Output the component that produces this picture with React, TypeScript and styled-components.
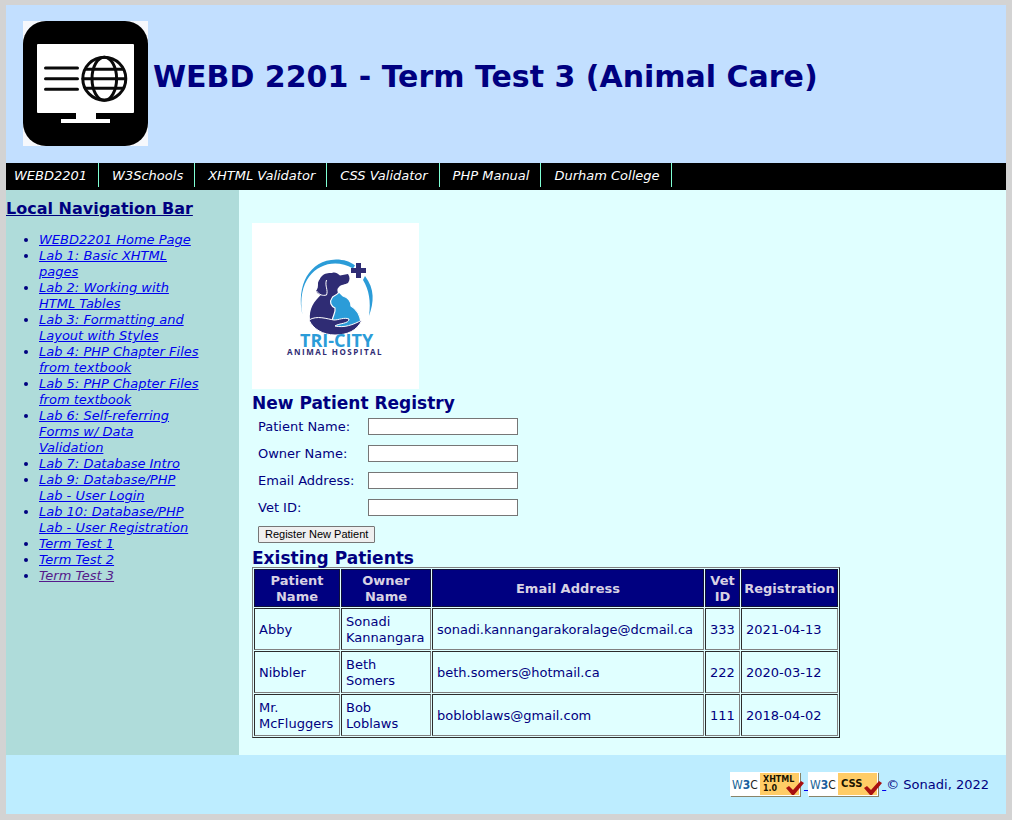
import React from "react";
import styled, { createGlobalStyle } from "styled-components";

const GlobalStyle = createGlobalStyle`
  * { box-sizing: border-box; }
  body {
    margin: 0;
    padding: 5px 6px 6px;
    background: #d3d3d3;
    color: #000080;
    font: 13px/16px Verdana, "DejaVu Sans", sans-serif;
  }
`;

const Header = styled.header`
  display: flex;
  align-items: center;
  gap: 5px;
  padding: 16px 17px 17px;
  background: #c2dfff;
`;

const Title = styled.h1`
  margin: 0;
  padding-bottom: 14px;
  font-size: 30px;
  line-height: 36px;
`;

const TopNav = styled.nav`
  display: flex;
  height: 27px;
  background: #000;
`;

const TopLink = styled.a`
  height: 24px;
  padding: 5px 11px 3px 13px;
  border-right: 1px solid #7fffd4;
  color: #fff;
  font-style: italic;
  text-decoration: none;
  &:first-child { padding-left: 8px; }
`;

const Columns = styled.div`
  display: grid;
  grid-template-columns: 233px 1fr;
`;

const Sidebar = styled.aside`
  padding-top: 10px;
  background: #afdcda;
`;

const Heading = styled.h2`
  margin: 0;
  font-size: 17px;
  line-height: 18px;
`;

const NavHeading = styled(Heading)`
  font-size: 16px;
  text-decoration: underline;
`;

const LinkList = styled.ul`
  margin: 14px 0 0;
  padding: 0 38px 0 33px;
`;

const SideLink = styled.a<{ $visited?: boolean }>`
  color: ${(p) => (p.$visited ? "#551a8b" : "#0000ee")};
  font-style: italic;
`;

const Main = styled.main`
  padding: 33px 13px 17px;
  background: #e0ffff;
`;

const Hospital = styled.svg`
  display: block;
  margin-bottom: 5px;
`;

const Form = styled.form`
  display: grid;
  grid-template-columns: 110px 150px;
  row-gap: 10px;
  padding: 6px;
  align-items: center;
  justify-items: start;
`;

const Field = styled.input`
  width: 100%;
  height: 17px;
  padding: 1px 2px;
  border: 1px solid #767676;
  background: #fff;
`;

const Submit = styled.button`
  grid-column: 1 / -1;
  height: 17px;
  padding: 0 6px;
  border: 1px solid #767676;
  border-radius: 1px;
  background: #efefef;
  color: #000;
  font: 11px/15px "Liberation Sans", Arial, sans-serif;
`;

const Patients = styled.table`
  table-layout: fixed;
  width: 588px;
  border: 1px solid;
  border-color: #808080 #2c2c2c #2c2c2c #808080;
  border-spacing: 1px;
`;

const Th = styled.th<{ $width: number }>`
  width: ${(p) => p.$width}px;
  padding: 3px 2px 1px;
  border: 1px solid #101038;
  background: #000080;
  color: #d8d2e4;
`;

const Td = styled.td`
  padding: 5px 4px 3px;
  border: 1px solid;
  border-color: #2c2c2c #808080 #808080 #2c2c2c;
`;

const Footer = styled.footer`
  display: flex;
  justify-content: flex-end;
  padding: 17px;
  background: #bdedff;
  line-height: 25px;
`;

const BadgeLink = styled.a`
  display: flex;
  color: #0000ee;
  text-decoration: underline;
`;

const BadgeGap = styled.span`
  white-space: pre;
`;

const topLinks = ["WEBD2201", "W3Schools", "XHTML Validator", "CSS Validator", "PHP Manual", "Durham College"];

const sideLinks = [
  "WEBD2201 Home Page",
  "Lab 1: Basic XHTML pages",
  "Lab 2: Working with HTML Tables",
  "Lab 3: Formatting and Layout with Styles",
  "Lab 4: PHP Chapter Files from textbook",
  "Lab 5: PHP Chapter Files from textbook",
  "Lab 6: Self-referring Forms w/ Data Validation",
  "Lab 7: Database Intro",
  "Lab 9: Database/PHP Lab - User Login",
  "Lab 10: Database/PHP Lab - User Registration",
  "Term Test 1",
  "Term Test 2",
  "Term Test 3",
];

const fields = [
  { id: "patient", label: "Patient Name:" },
  { id: "owner", label: "Owner Name:" },
  { id: "email", label: "Email Address:" },
  { id: "vet", label: "Vet ID:" },
];

const columns = [
  { name: "Patient Name", width: 86 },
  { name: "Owner Name", width: 90 },
  { name: "Email Address", width: 272 },
  { name: "Vet ID", width: 35 },
  { name: "Registration", width: 97 },
];

const patients = [
  ["Abby", "Sonadi Kannangara", "sonadi.kannangarakoralage@dcmail.ca", "333", "2021-04-13"],
  ["Nibbler", "Beth Somers", "beth.somers@hotmail.ca", "222", "2020-03-12"],
  ["Mr. McFluggers", "Bob Loblaws", "bobloblaws@gmail.com", "111", "2018-04-02"],
];

const SiteLogo = () => (
  <svg width="125" height="125" viewBox="0 0 125 125" role="img" aria-label="Web page on a monitor">
    <rect width="125" height="125" fill="#f6f8fc" />
    <rect width="125" height="125" rx="23" fill="#000" />
    <rect x="14" y="23" width="97" height="69" rx="1" fill="#fff" />
    <path d="M53 91h20v7h14v4H38v-4h15z" fill="#fff" />
    <g fill="none" stroke="#0a0a0a" strokeWidth="3" strokeLinecap="round">
      <path d="M22.500 47h32M22.500 57.700h32M22.500 68.300h32" />
      <circle cx="81.300" cy="57.700" r="21.500" />
      <ellipse cx="81.300" cy="57.700" rx="12.300" ry="21.500" />
      <path d="M62.500 48.300h37.600M60 57.700h42.500M62.500 67.300h37.600" />
    </g>
  </svg>
);

const HospitalLogo = () => (
  <Hospital width="167" height="166" viewBox="0 0 167 166" role="img" aria-label="Tri-City Animal Hospital">
    <rect width="167" height="166" fill="#fff" />
    <g fill="#2b9cd8">
      <path d="M50.500 92C44 63 57 37 84 36.500c8 0 14 2 19 6l-2 3C76 31 43 49 50.500 92z" />
      <path d="M113 53c10 13 9 26 4 40 2-15 0-26-6-36z" />
    </g>
    <path d="M104 40h5v5h5v5h-5v5h-5v-5h-5v-5h5z" fill="#2f2c74" />
    <path d="M80 50c3-1 5 0 8 2.500l8-1.500c2 3 2 6 0 9-3 2-7 1-9 4-2 2-2 3-1 6l4 28c-10 4-24 2-32-1-1-11 3-18 13-27-3 0-5-1-6-3 4-5 1-11 5-14 3-3 6-3 10-3z" fill="#2f2c74" />
    <path d="M75 54c-5-1-8 2-9 6 0 3 0 6-2 8 2 4 6 5 11 4 2-5-2-9 0-18z" fill="#2f2c74" />
    <path d="M64.500 68c3 4 6 5 10 4 2-5-2-9 0-15" fill="none" stroke="#fff" strokeWidth="1" />
    <path d="M80 75c1-3 5-2 7-6l4 4c6 2 8 6 8 10 7 4 9 10 10 16-8 5-18 6-26 5l-3-6c1-6 4-9 3-13-4-2-6-6-3-10z" fill="#2b9cd8" stroke="#fff" strokeWidth="1.200" />
    <path d="M57 97c8-5 18-1 25 0 5 0 10-3 15-1 0 5-10 4-14 7 9 2 18-1 27-6-5 11-15 15-27 15s-22-6-26-15z" fill="#2f2c74" stroke="#fff" strokeWidth="1" />
    <text x="48" y="124" fill="#2b9cd8" fontFamily="Open Sans, sans-serif" fontSize="18" fontWeight="700">TRI-CITY</text>
    <text x="35" y="132" fill="#2f2c74" fontFamily="Open Sans, sans-serif" fontSize="8" fontWeight="700" letterSpacing="1.500">ANIMAL HOSPITAL</text>
  </Hospital>
);

const Badge = ({ lines }: { lines: string[] }) => (
  <svg width="74" height="25" viewBox="0 0 74 25" role="img" aria-label={"Valid " + lines.join(" ")}>
    <rect x="1" y="1" width="70" height="24" fill="#8a8468" />
    <rect width="70" height="24" fill="#fff" />
    <rect x="30" y="1" width="39" height="22" fill="#fc6" />
    <text x="2" y="17" fontFamily="DejaVu Sans Condensed, DejaVu Sans, sans-serif" fontSize="12">
      <tspan fill="#1a6496">W</tspan>
      <tspan fill="#1a5fa0" fontWeight="700">3</tspan>
      <tspan fill="#222">C</tspan>
    </text>
    <g fill="#1a1400" fontFamily="DejaVu Sans, sans-serif" fontWeight="700">
      {lines.length > 1 ? (
        lines.map((line, i) => <text key={line} x="33" y={10 + i * 9} fontSize="8">{line}</text>)
      ) : (
        <text x="33" y="15" fontSize="10">{lines[0]}</text>
      )}
    </g>
    <path d="M56 16l3-2 4 4 8-9 3 2-10 12h-2z" fill="#a81010" />
  </svg>
);

export default function App() {
  return (
    <>
      <GlobalStyle />
      <Header>
        <SiteLogo />
        <Title>WEBD 2201 - Term Test 3 (Animal Care)</Title>
      </Header>
      <TopNav>
        {topLinks.map((t) => <TopLink key={t} href="#">{t}</TopLink>)}
      </TopNav>
      <Columns>
        <Sidebar>
          <NavHeading>Local Navigation Bar</NavHeading>
          <LinkList>
            {sideLinks.map((t) => (
              <li key={t}><SideLink href="#" $visited={t === "Term Test 3"}>{t}</SideLink></li>
            ))}
          </LinkList>
        </Sidebar>
        <Main>
          <HospitalLogo />
          <Heading>New Patient Registry</Heading>
          <Form onSubmit={(e) => e.preventDefault()}>
            {fields.map((f) => (
              <React.Fragment key={f.id}>
                <label htmlFor={f.id}>{f.label}</label>
                <Field id={f.id} type="text" />
              </React.Fragment>
            ))}
            <Submit type="submit">Register New Patient</Submit>
          </Form>
          <Heading>Existing Patients</Heading>
          <Patients>
            <thead>
              <tr>{columns.map((c) => <Th key={c.name} $width={c.width}>{c.name}</Th>)}</tr>
            </thead>
            <tbody>
              {patients.map((row) => (
                <tr key={row[0]}>{row.map((cell) => <Td key={cell}>{cell}</Td>)}</tr>
              ))}
            </tbody>
          </Patients>
        </Main>
      </Columns>
      <Footer>
        <BadgeLink href="#"><Badge lines={["XHTML", "1.0"]} /><BadgeGap> </BadgeGap></BadgeLink>
        <BadgeLink href="#"><Badge lines={["CSS"]} /><BadgeGap> </BadgeGap></BadgeLink>
        <span>© Sonadi, 2022</span>
      </Footer>
    </>
  );
}
